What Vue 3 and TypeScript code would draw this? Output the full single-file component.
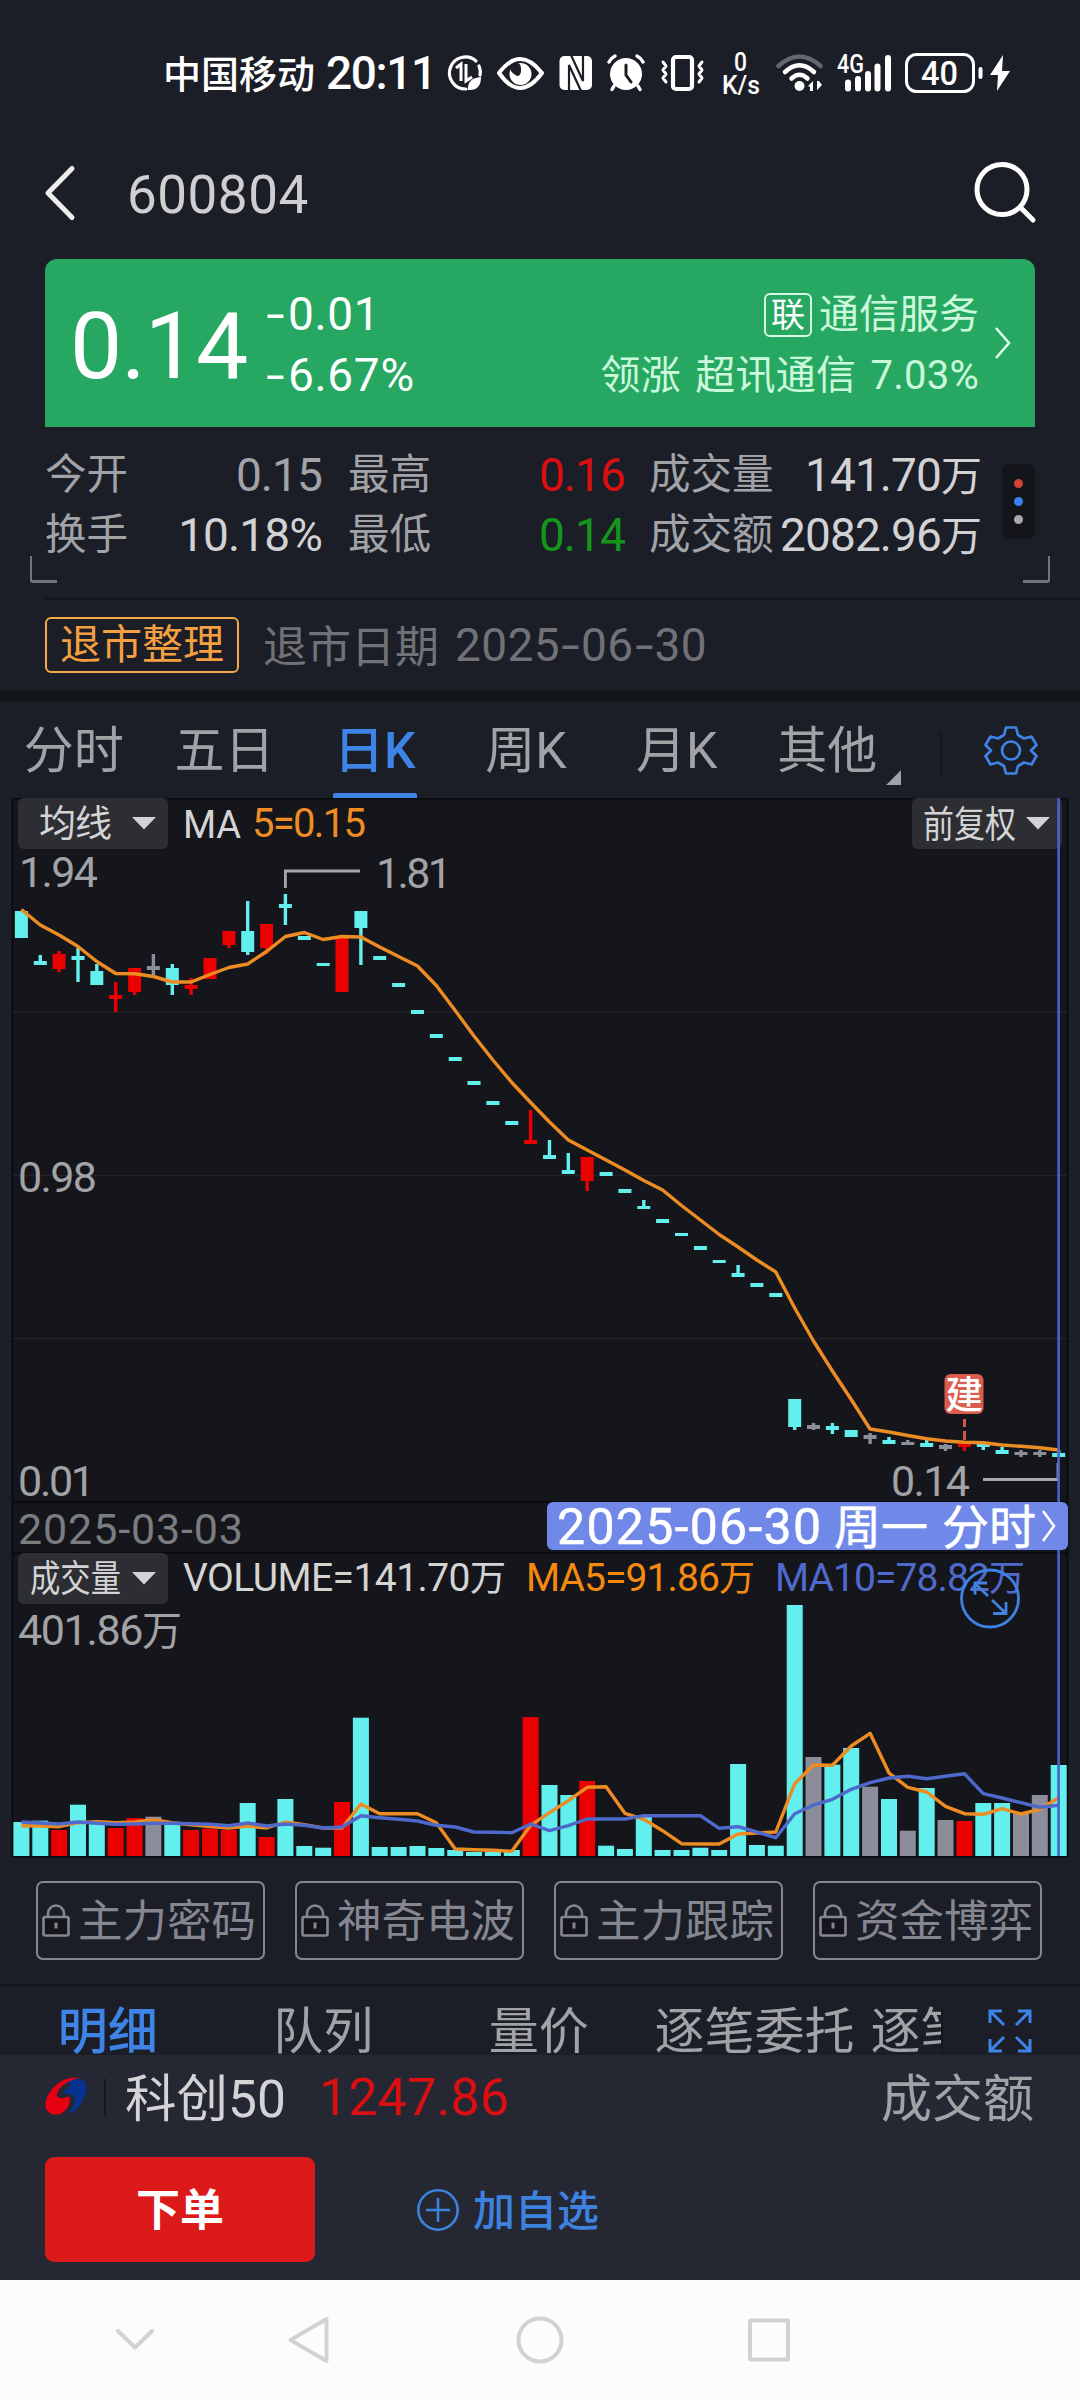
<script setup lang="ts">
type Tone = 'c' | 'r' | 'g'
interface Candle { tone: Tone; top: number; bottom: number; high: number; low: number }

const STEP = 18.86
const FIRST = 21.4
const BASE = 1856
const at = (i: number): number => +(FIRST + i * STEP).toFixed(1)

const colors: Record<Tone, string> = { c: '#62efee', r: '#ea0000', g: '#8b8d9a' }

// tone, body top, body bottom, high, low
const raw: [Tone, number, number, number, number][] = [
  ['c', 911, 938, 911, 938], ['c', 961, 965, 955, 965], ['r', 954, 969, 951, 972], ['c', 956, 960, 948, 982],
  ['c', 971, 985, 964, 985], ['r', 995, 999, 982, 1012], ['r', 968, 992, 968, 995], ['g', 966, 970, 954, 975],
  ['c', 968, 985, 964, 995], ['r', 985, 989, 978, 995], ['r', 958, 979, 958, 979], ['r', 931, 945, 931, 948],
  ['c', 931, 952, 901, 955], ['r', 924, 948, 924, 954], ['c', 904, 908, 894, 925], ['c', 936, 940, 936, 940],
  ['c', 963, 966, 963, 966], ['r', 938, 992, 938, 992], ['c', 911, 928, 911, 965], ['c', 956, 960, 956, 960],
  ['c', 983, 987, 983, 987], ['c', 1010, 1014, 1010, 1014], ['c', 1034, 1038, 1034, 1038], ['c', 1057, 1061, 1057, 1061],
  ['c', 1081, 1085, 1081, 1085], ['c', 1101, 1105, 1101, 1105], ['c', 1121, 1125, 1121, 1125], ['r', 1140, 1144, 1110, 1144],
  ['c', 1155, 1159, 1140, 1159], ['c', 1170, 1174, 1153, 1174], ['r', 1157, 1181, 1157, 1191], ['c', 1172, 1176, 1172, 1176],
  ['c', 1189, 1193, 1189, 1193], ['c', 1206, 1209, 1200, 1209], ['c', 1219, 1223, 1219, 1223], ['c', 1233, 1236, 1233, 1236],
  ['c', 1246, 1250, 1246, 1250], ['c', 1260, 1263, 1260, 1263], ['c', 1273, 1277, 1265, 1277], ['c', 1283, 1287, 1283, 1287],
  ['c', 1293, 1297, 1293, 1297], ['c', 1399, 1427, 1399, 1430], ['g', 1425, 1429, 1423, 1430], ['c', 1426, 1430, 1423, 1434],
  ['c', 1430, 1437, 1430, 1437], ['g', 1435, 1439, 1433, 1444], ['c', 1440, 1444, 1437, 1444], ['g', 1442, 1445, 1440, 1445],
  ['c', 1443, 1447, 1440, 1447], ['g', 1445, 1449, 1444, 1451], ['r', 1443, 1447, 1443, 1451], ['c', 1444, 1447, 1444, 1450],
  ['c', 1450, 1454, 1447, 1454], ['g', 1452, 1455, 1450, 1457], ['g', 1452, 1455, 1450, 1457], ['c', 1453, 1457, 1450, 1457],
]
const candles: Candle[] = raw.map(([tone, top, bottom, high, low]) => ({ tone, top, bottom, high, low }))

const volTops = [
  1822, 1820.7, 1830, 1804.7, 1822.5, 1828, 1818, 1816.7, 1823, 1830, 1828.7, 1830, 1803, 1837, 1799, 1846, 1847.7, 1802,
  1717.7, 1847, 1847, 1846, 1848, 1850, 1852, 1852, 1850, 1717, 1785, 1795, 1781, 1845.7, 1849, 1817, 1850, 1850, 1847.7,
  1850, 1764, 1845, 1845.7, 1605, 1757, 1764.7, 1748, 1786.7, 1799, 1830.7, 1788, 1820, 1821, 1803, 1803, 1814, 1795, 1765,
]

const line = (ys: number[]): string => ys.map((y, i) => `${at(i)},${y}`).join(' ')
const priceMa = line([
  909.5, 925, 935, 946.5, 961.5, 973.5, 973.7, 976.5, 982, 982, 974.5, 967.5, 964, 951.5, 936.5, 932.5, 939.5, 936.5, 937,
  947, 956.5, 966, 985.5, 1010.5, 1036, 1060, 1082.5, 1102.5, 1122, 1140, 1150, 1160, 1170, 1180.5, 1190, 1205.5, 1220,
  1234.5, 1247, 1260, 1272, 1308, 1341, 1371, 1399.5, 1429, 1432, 1435.5, 1438.7, 1441, 1442.3, 1442.7, 1445, 1446.3, 1447.7, 1450,
])
const volMa5 = line([
  1825.7, 1826, 1826.7, 1822.7, 1821.7, 1822.7, 1822, 1819.7, 1822.7, 1824.7, 1826.5, 1828, 1826, 1828, 1822, 1824.7, 1828,
  1828, 1804, 1813.7, 1813.7, 1813.7, 1822.7, 1849, 1849.7, 1850.3, 1851.3, 1825.3, 1812.7, 1800.7, 1787.3, 1786.7, 1813.3,
  1819.3, 1830.7, 1843.7, 1844, 1844, 1834, 1833, 1832, 1783.7, 1765, 1765.3, 1746, 1733.3, 1773, 1787.3, 1792, 1806.3,
  1813.7, 1814.3, 1808.7, 1814, 1809.3, 1797.7,
])
const volMa10 = line([
  1822, 1823, 1824, 1822, 1823.3, 1824.3, 1824, 1823.3, 1823.3, 1823.7, 1824.3, 1825.7, 1823, 1826, 1824, 1825.3, 1828, 1827,
  1815.7, 1817.7, 1819.3, 1821, 1825.3, 1827, 1832, 1832.3, 1832.7, 1824, 1830.7, 1825.7, 1819, 1819, 1819, 1815.7, 1815.7,
  1815.7, 1815.7, 1828.3, 1826.7, 1832, 1837.7, 1813.7, 1805, 1799.3, 1789.3, 1782.7, 1778, 1776.3, 1778.7, 1776.3, 1773.7,
  1793.7, 1798, 1802.7, 1807.3, 1805.3,
])

const periods = ['分时', '五日', '日K', '周K', '月K', '其他']
const locked = ['主力密码', '神奇电波', '主力跟踪', '资金博弈']
const gridY = [1012, 1175.5, 1338.5]
</script>

<template>
  <div class="screen">
    <div class="status">
      <span class="carrier">中国移动</span>
      <span class="clock">20:11</span>
      <svg class="status-icons" width="580" height="56" viewBox="440 45 580 56" fill="none" stroke="#fff" stroke-linecap="round">
        <path d="M476 61A16 16 0 1 0 466 89M479 66Q481 71 480 75" stroke-width="3.2" />
        <path d="M456 68l5-4v17M466 64v17l6-4" stroke-width="3" stroke-linecap="butt" />
        <path d="M468 90q-1-12 13-13q0 14-13 13z" fill="#fff" stroke="none" />
        <path d="M499 73Q520 45 542 73Q520 103 499 73z" stroke-width="4" stroke-linejoin="round" />
        <circle cx="520.500" cy="74" r="11" fill="#fff" stroke="none" />
        <path d="M512 65q10-6 9 7q-2 7-7 2q-6-4-2-9z" fill="#1c1e27" stroke="none" />
        <rect x="559.500" y="56" width="32.500" height="34" rx="5" fill="#fff" stroke="none" />
        <path d="M569 92V65l12.500 27M570.500 54l12.500 27V54" stroke="#1c1e27" stroke-width="2.200" stroke-linecap="butt" />
        <circle cx="626" cy="74" r="16" fill="#fff" stroke="none" />
        <path d="M609 62q2-4 6-6M643 62q-2-4-6-6M614 86l-2 3.500M638 86l2 3.500" stroke-width="3.500" />
        <path d="M626 65v10l5 7" stroke="#1c1e27" stroke-width="3" />
        <rect x="673" y="57" width="19" height="32" rx="3" stroke-width="4.200" />
        <path d="M663 62l3 4-3 4 3 4-3 4 3 4M702 62l-3 4 3 4-3 4 3 4-3 4" stroke-width="3" stroke-linejoin="round" />
        <g fill="#fff" stroke="none" font-weight="500">
          <text x="734" y="71" font-size="25" textLength="13" lengthAdjust="spacingAndGlyphs">0</text>
          <text x="722" y="94" font-size="25" textLength="38" lengthAdjust="spacingAndGlyphs">K/s</text>
          <text x="837" y="72.500" font-size="25" textLength="27" lengthAdjust="spacingAndGlyphs">4G</text>
          <text x="921" y="85" font-size="34" textLength="37" lengthAdjust="spacingAndGlyphs">40</text>
        </g>
        <path d="M778.500 66Q799.500 47 820.500 66" stroke="#66676d" stroke-width="4.500" />
        <path d="M785 72Q799.500 58.500 814 72M791.500 78.500Q799.500 71 807.500 78.500" stroke-width="4.500" />
        <circle cx="799.500" cy="86" r="5" fill="#fff" stroke="none" />
        <path d="M808 86l5-5v10h-3v-4zM822 85l-5 5V81h2z" fill="#fff" stroke="none" />
        <path d="M848 82.500v6M858 79v9.500M868 74v14.500M877.500 66.500v22M888 58v30.500" stroke-width="6" />
        <rect x="906.500" y="54.500" width="67" height="37" rx="10" stroke-width="3" />
        <path d="M980.500 69v8" stroke-width="4" />
        <path d="M1003 55L990 75h8l-1 16 13-20h-8z" fill="#fff" stroke="none" />
      </svg>
    </div>

    <div class="head">
      <svg width="40" height="60" viewBox="40 163 40 60" fill="none" stroke="#ededee" stroke-width="5" stroke-linecap="round" stroke-linejoin="round"><path d="M72 168.500L48 193l24 24.500" /></svg>
      <span class="code">600804</span>
      <svg class="search" width="70" height="70" viewBox="970 158 70 70" fill="none" stroke="#fff" stroke-width="5" stroke-linecap="round"><circle cx="1002" cy="189.500" r="25" /><path d="M1021 208l12 12" /></svg>
    </div>

    <div class="card">
      <span class="price">0.14</span>
      <div class="change">
        <span><i class="hy">-</i>0.01</span>
        <span><i class="hy">-</i>6.67%</span>
      </div>
      <div class="sector">
        <div class="sector-name"><span class="link">联</span>通信服务</div>
        <div class="leader">领涨 超讯通信 7.03%</div>
      </div>
      <svg class="chev" width="24" height="36" viewBox="0 0 24 36" fill="none" stroke="#e6ffef" stroke-width="2.500"><path d="M5 3l13 15L5 33" /></svg>
    </div>

    <div class="stats">
      <div class="col c1"><p><span>今开</span><b class="dim">0.15</b></p><p><span>换手</span><b>10.18%</b></p></div>
      <div class="col c2"><p><span>最高</span><b class="up">0.16</b></p><p><span>最低</span><b class="down">0.14</b></p></div>
      <div class="col c3"><p><span>成交量</span><b>141.70<em>万</em></b></p><p><span>成交额</span><b>2082.96<em>万</em></b></p></div>
      <div class="dots"><i class="d1"></i><i class="d2"></i><i class="d3"></i></div>
    </div>
    <div class="corners"><i class="bl"></i><i class="br"></i></div>

    <div class="notice">
      <span class="tag">退市整理</span>
      <span class="when">退市日期</span>
      <span class="day">2025<i class="hy">-</i>06<i class="hy">-</i>30</span>
    </div>

    <div class="periods">
      <span v-for="(p, i) in periods" :key="p" class="period" :class="{ on: i === 2 }">{{ p }}</span>
      <i class="fold"></i>
      <i class="rule"></i>
      <svg class="gear" width="56" height="56" viewBox="983 722 56 56" fill="none" stroke="#3d84e6" stroke-width="2.700" stroke-linejoin="round">
        <path d="M1006 727.500h10l2 7.500 6 3.500 7.500-2 5 8.500-5.500 5.500v0l5.500 5.500-5 8.500-7.500-2-6 3.500-2 7.500h-10l-2-7.500-6-3.500-7.500 2-5-8.500 5.500-5.500-5.500-5.500 5-8.500 7.500 2 6-3.500z" />
        <circle cx="1011" cy="750.500" r="9" />
      </svg>
    </div>

    <svg class="chart" width="1080" height="1068" viewBox="0 798 1080 1068">
      <rect x="12" y="798" width="1056" height="1058" fill="#15161b" />
      <path d="M12 798.500H1068M12.500 798V1856M1067.500 798V1856M12 1502H1068M12 1553H1068M12 1856.500H1068" stroke="#0a0b0e" stroke-width="2" />
      <path v-for="y in gridY" :key="y" :d="`M13 ${y}H1067`" stroke="#222328" stroke-width="1.500" />

      <g v-for="(k, i) in candles" :key="i" :fill="colors[k.tone]">
        <rect v-if="k.high < k.top || k.low > k.bottom" :x="at(i) - 1.7" :y="k.high" width="3.400" :height="k.low - k.high" />
        <rect :x="at(i) - 6.5" :y="k.top" width="13" :height="k.bottom - k.top" />
        <rect :x="at(i) - 8" :y="volTops[i]" width="16" :height="BASE - volTops[i]" />
      </g>
      <polyline :points="priceMa" class="ma" stroke="#ee8c24" />
      <polyline :points="volMa5" class="ma" stroke="#ee8c24" />
      <polyline :points="volMa10" class="ma" stroke="#4f68cc" />

      <path d="M285.400 888V871H360M983 1479.500H1058V1463" fill="none" stroke="#a6a7ab" stroke-width="2.800" />
      <g fill="#a2a3a6" font-size="43">
        <text x="19" y="887" textLength="79">1.94</text>
        <text x="376" y="888" textLength="76">1.81</text>
        <text x="18" y="1191.500" textLength="79">0.98</text>
        <text x="18" y="1495.500" textLength="77">0.01</text>
        <text x="891" y="1495.500" textLength="79">0.14</text>
        <text x="18" y="1645" textLength="164">401.86<tspan font-size="40">万</tspan></text>
      </g>
      <text x="18" y="1543.500" font-size="43" fill="#7b7c80" textLength="225">2025-03-03</text>

      <rect x="18" y="798" width="150" height="51" rx="6" class="btn" />
      <text x="39" y="837" font-size="37" class="pale" textLength="73">均线</text>
      <path d="M132 817h24l-12 12.500z" class="pale" />
      <rect x="912" y="798" width="150" height="51" rx="6" class="btn" />
      <text x="923" y="837.500" font-size="37" class="pale" textLength="93" lengthAdjust="spacingAndGlyphs">前复权</text>
      <path d="M1026 817h24l-12 12.500z" class="pale" />
      <rect x="18" y="1553" width="150" height="51" rx="6" class="btn" />
      <text x="30" y="1592" font-size="37" class="pale" textLength="91" lengthAdjust="spacingAndGlyphs">成交量</text>
      <path d="M132 1572h24l-12 12.500z" class="pale" />

      <text x="183" y="838" font-size="38" class="pale" textLength="58">MA</text>
      <text x="252" y="836.500" font-size="40" fill="#f08c24" textLength="114">5=0.15</text>
      <text x="183" y="1590.500" font-size="39" class="pale" textLength="323">VOLUME=141.70<tspan font-size="36">万</tspan></text>
      <text x="526" y="1590.500" font-size="39" fill="#f58a10" textLength="229">MA5=91.86<tspan font-size="36">万</tspan></text>
      <text x="775" y="1590.500" font-size="39" fill="#5069cc" textLength="250">MA10=78.82<tspan font-size="36">万</tspan></text>

      <path d="M964.500 1419v8M964.500 1431v9" stroke="#d0574a" stroke-width="3" />
      <rect x="944.500" y="1374" width="39" height="40" rx="6" fill="#da5c4c" />
      <text x="945.500" y="1408" font-size="38" font-weight="500" fill="#fff" textLength="37.500" lengthAdjust="spacingAndGlyphs">建</text>

      <path d="M1058.600 798V1856" stroke="#4a63c6" stroke-width="2.600" />
      <rect x="547" y="1502" width="521" height="48" rx="6" fill="#7089e8" />
      <g fill="#fff" stroke="#fff" stroke-width=".5">
        <text x="557" y="1544" font-size="50" textLength="264">2025-06-30</text>
        <text x="834" y="1543.500" font-size="47" textLength="94">周一</text>
        <text x="942" y="1543.500" font-size="47" textLength="94">分时</text>
      </g>
      <path d="M1043 1511l11 15-11 15" fill="none" stroke="#fff" stroke-width="2.500" />

      <g fill="none" stroke="#3f82e2" stroke-width="2.800">
        <circle cx="990" cy="1598.500" r="28.500" />
        <path d="M988 1596l-13-12.500M975 1594.500v-11.500h12M992 1600l14 13.500M1006 1602v11.500h-13" />
      </g>
    </svg>

    <div class="locks">
      <div v-for="l in locked" :key="l" class="lock">
        <svg width="28" height="34" viewBox="0 0 28 34" fill="none" stroke="#858692" stroke-width="2.600">
          <path d="M6 13V9.500a8 8 0 0 1 16 0V13" />
          <rect x="1.500" y="13" width="25" height="18.500" rx="1.500" fill="#14151a" />
          <path d="M14 18.500v6" stroke-width="3" />
        </svg>
        <span>{{ l }}</span>
      </div>
    </div>

    <div class="details">
      <div class="scroller">
        <span class="on">明细</span><span>队列</span><span>量价</span><span class="wide">逐笔委托</span><span class="cut">逐笔</span>
      </div>
      <i class="rule"></i>
      <svg class="expand" width="46" height="46" viewBox="0 0 46 46" fill="none" stroke="#3d84e6" stroke-width="3">
        <path d="M3 15V3h12M3 3l14 14M31 3h12v12M43 3L29 17M3 31v12h12M3 43l14-14M43 31v12H31M43 43L29 29" />
      </svg>
    </div>

    <div class="bottom">
      <div class="index">
        <svg width="42" height="42" viewBox="0 0 42 42">
          <path d="M20 8Q30 0 38 4Q45 12 38 24Q32 36 22 38Q32 28 29 21Q26 16 18 18Q20 12 28 8z" fill="#07328f" />
          <path d="M35 2Q20-1 8 12Q-2 24 1 33Q6 41 15 38Q24 34 25 24Q25 20 21 21Q15 24 12 20Q11 14 20 8Q27 3 35 2z" fill="#e60012" />
        </svg>
        <i class="bar"></i>
        <span class="iname">科创50</span>
        <span class="ivalue">1247.86</span>
        <span class="iamount">成交额</span>
      </div>
      <div class="actions">
        <div class="order">下单</div>
        <svg width="44" height="44" viewBox="0 0 44 44" fill="none" stroke="#3e82e0" stroke-width="2.600"><circle cx="22" cy="22" r="19.700" /><path d="M10 22h24M22 10v24" /></svg>
        <span class="add">加自选</span>
      </div>
    </div>

    <div class="nav">
      <svg width="1080" height="120" viewBox="0 2280 1080 120" fill="none" stroke="#d2d2d2" stroke-width="4" stroke-linejoin="round" stroke-linecap="round">
        <path d="M118 2331l17 16.500 17-16.500" />
        <path d="M326.500 2319v42l-36-21z" />
        <circle cx="540" cy="2340" r="21.500" />
        <rect x="750" y="2320.500" width="38" height="39" rx="1" />
      </svg>
    </div>
  </div>
</template>

<style>
body { margin: 0; background: #1c1e27; }
</style>

<style scoped>
.screen {
  width: 1080px;
  height: 2400px;
  overflow: hidden;
  display: flex;
  flex-direction: column;
  background: #1c1e27;
  font-family: Roboto, "Noto Sans CJK SC", sans-serif;
  color: #a2a3a7;
}
.screen > * { flex: none; box-sizing: border-box; }
i, em, b { font-style: normal; font-weight: 400; }
p { margin: 0; }
svg { display: block; flex: none; }
.hy { display: inline-block; transform: scaleX(1.45); margin: 0 .09em; letter-spacing: 0; }

.status { height: 145px; display: flex; align-items: center; padding-left: 163px; color: #fff; font-weight: 500; }
.carrier { width: 153px; font-size: 38px; padding-bottom: 2px; box-sizing: border-box; }
.clock { width: 124px; padding-left: 10px; box-sizing: border-box; font-size: 46px; letter-spacing: -1.4px; white-space: nowrap; }

.head { height: 114px; display: flex; align-items: flex-start; padding: 18px 0 0 40px; }
.code { margin: 1px 0 0 47px; font-size: 53px; line-height: 62px; letter-spacing: .5px; color: #cfcfd1; flex: 1; }
.search { margin: -5px 40px 0 0; }

.card { height: 168px; margin: 0 45px; padding-left: 25px; background: #27a862; border-radius: 12px 12px 0 0; display: flex; align-items: flex-start; color: #fff; }
.price { width: 196px; padding-top: 33px; font-size: 93px; line-height: 110px; letter-spacing: -1px; }
.change { display: flex; flex-direction: column; width: 260px; padding-top: 25px; font-size: 46px; }
.change span { line-height: 61px; letter-spacing: .7px; }
.change .hy { margin: 0 .13em 0 .07em; }
.sector { flex: 1; display: flex; flex-direction: column; align-items: flex-end; padding-top: 25px; font-size: 40px; line-height: 61px; color: #ccf8dc; white-space: nowrap; }
.sector-name { display: flex; align-items: center; }
.link { box-sizing: border-box; width: 48px; height: 44px; margin-right: 7px; border: 2px solid #d8fbe5; border-radius: 6px; font-size: 34px; line-height: 41px; text-align: center; color: #fff; }
.leader { word-spacing: 4px; letter-spacing: .25px; }
.chev { margin: 66px 20px 0 12px; }

.stats { height: 129px; display: flex; padding-left: 45px; padding-top: 18px; }
.col p { display: flex; justify-content: space-between; height: 60px; line-height: 60px; white-space: nowrap; }
.col span { font-size: 41.500px; }
.col b { font-size: 46px; letter-spacing: -.9px; color: #d2d2d4; }
.col em { font-size: 41px; letter-spacing: 0; line-height: 0; }
.col .dim { color: #a2a3a7; }
.col .up { color: #d90f12; }
.col .down { color: #14961a; }
.c1 { width: 277px; }
.c2 { width: 277px; margin-left: 26px; }
.c3 { width: 333px; margin-left: 24px; }
.dots { width: 33px; height: 75px; margin: 19px 0 0 20px; border-radius: 7px; background: #14151a; display: flex; flex-direction: column; align-items: center; justify-content: center; gap: 9px; }
.dots i { width: 9px; height: 9px; border-radius: 50%; }
.d1 { background: #cf4534; }
.d2 { background: #3b82f0; }
.d3 { background: #a9a9ad; }
.corners { height: 42px; margin-left: 30px; margin-right: 30px; display: flex; justify-content: space-between; }
.corners i { width: 27px; height: 27px; box-sizing: border-box; border: 0 solid #72747a; border-bottom-width: 3px; }
.corners .bl { border-left-width: 2px; border-bottom-left-radius: 3px; }
.corners .br { border-right-width: 2px; border-bottom-right-radius: 3px; }

.notice { height: 104px; padding-left: 45px; border-bottom: 12px solid #14151a; display: flex; align-items: center; background: linear-gradient(#14151a, #14151a) 45px 0 / 100% 2px no-repeat; color: #717278; white-space: nowrap; }
.tag { box-sizing: border-box; width: 194px; height: 56px; margin-top: 2px; border: 2px solid #f7a849; border-radius: 6px; font-size: 41px; line-height: 53px; text-align: center; color: #f5a040; }
.when { margin-left: 24px; width: 192px; font-size: 44px; }
.day { padding-top: 1px; font-size: 46px; letter-spacing: .4px; }

.periods { height: 96px; display: flex; align-items: stretch; }
.period { position: relative; width: 150.700px; line-height: 99px; font-size: 50px; text-align: center; text-indent: -3px; }
.period.on { color: #3d84e6; font-weight: 500; text-indent: -4px; }
.period.on::after { content: ""; position: absolute; left: 32px; bottom: 0; width: 84px; height: 5px; border-radius: 2px 2px 0 0; background: #3d84e6; }
.fold { width: 15px; height: 15px; margin: 68px 0 0 -18px; background: #a2a3a7; clip-path: polygon(100% 0, 100% 100%, 0 100%); }
.rule { flex: none; width: 2px; height: 44px; background: #15161c; }
.periods .rule { margin: 30px 0 0 39px; }
.gear { margin: 20px 0 0 41px; }

.chart { font-family: Roboto, "Noto Sans CJK SC", sans-serif; }
.ma { fill: none; stroke-width: 3.400; stroke-linejoin: round; }
.btn { fill: #2d2e33; }
.pale { fill: #d4d4d5; }

.locks { height: 120px; padding: 15px 36px 0; display: flex; gap: 30px; border-bottom: 2px solid #14151b; }
.lock { box-sizing: border-box; width: 229px; height: 79px; border: 2px solid #858692; border-radius: 7px; display: flex; align-items: center; padding-left: 4px; gap: 8px; font-size: 44.500px; line-height: 70px; color: #858692; white-space: nowrap; }
.lock span { margin-top: 2px; }

.details { height: 69px; display: flex; overflow: hidden; }
.scroller { width: 941px; height: 93px; display: flex; overflow: hidden; font-size: 50px; line-height: 93px; white-space: nowrap; }
.scroller span { flex: none; width: 215.500px; text-align: center; }
.scroller .on { color: #3d84e6; font-weight: 500; }
.scroller .wide { width: 224px; text-align: left; padding-left: 8px; }
.scroller .cut { width: 100px; text-align: left; margin-left: -8px; }
.details .rule { margin: 23px 0 0 0; }
.expand { margin: 22px 0 0 44px; }

.bottom { height: 225px; background: #252733; }
.index { height: 84px; display: flex; align-items: center; padding: 0 46px 0 45px; font-size: 51px; white-space: nowrap; }
.bar { width: 2px; height: 37px; margin-left: 17px; background: #16171d; }
.iname { width: 194px; margin-left: 19px; padding-bottom: 5px; color: #d4d4d6; font-size: 51.500px; }
.ivalue { color: #d90f12; font-size: 52px; letter-spacing: .2px; }
.iamount { margin-left: auto; padding-bottom: 5px; }
.actions { display: flex; align-items: center; padding: 18px 0 0 45px; }
.order { width: 270px; height: 105px; border-radius: 9px; background: #dc1a1a; color: #fff; font-size: 44px; font-weight: 700; line-height: 108px; text-align: center; margin-right: 101px; }
.add { margin-left: 13px; padding-bottom: 4px; font-size: 42px; font-weight: 500; color: #3e82e0; }
.nav { height: 120px; background: #fcfcfc; }
</style>
